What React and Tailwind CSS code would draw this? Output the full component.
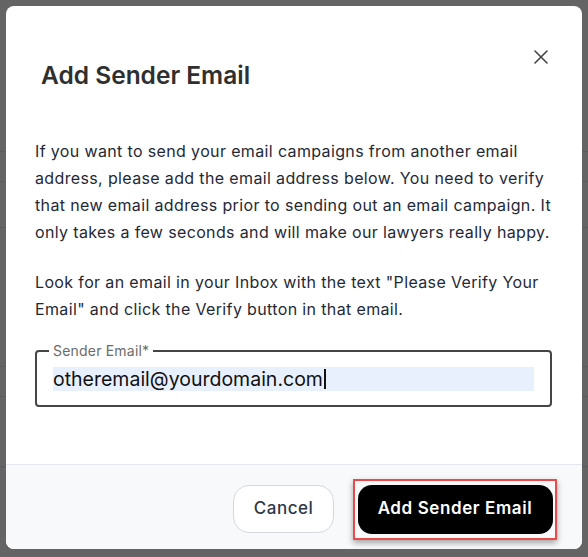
const CloseIcon = () => (
  <svg width="14" height="14" viewBox="0 0 14 14" fill="none" stroke="#444" strokeWidth="1.6" strokeLinecap="round">
    <path d="M1 1L13 13M13 1L1 13" />
  </svg>
);

const App = () => {
  return (
    <div className="relative w-[588px] h-[557px] overflow-hidden bg-[#646464] font-['Inter',sans-serif]">
      {/* page behind the dialog */}
      <div className="flex flex-col">
        <div className="h-[152px] border-b border-[#5a5a5a]" />
        <div className="h-[30px] border-b border-[#5a5a5a]" />
        <div className="h-[46px] border-b border-[#5a5a5a]" />
        <div className="h-[139px] border-b border-[#5a5a5a]" />
        <div className="h-[30px] border-b border-[#5a5a5a]" />
        <div className="h-[70px] border-b border-[#5a5a5a]" />
      </div>

      <div className="absolute left-[6px] top-[6px] w-[576px] h-[543px] flex flex-col overflow-hidden rounded-[8px] bg-white">
        <div className="flex items-start justify-between pt-[44px] pl-[35px] pr-[34px]">
          <h2 className="mt-[10px] text-[24.5px] leading-[30px] font-semibold text-[#2f2f2f]">Add Sender Email</h2>
          <button className="flex h-[14px] w-[14px] items-center justify-center">
            <CloseIcon />
          </button>
        </div>

        <div className="flex-1 pl-[29px] pr-[24px] pt-[48px] text-[16px] leading-[27px] tracking-[0.36px] text-[#1f2937] whitespace-nowrap">
          <p>
            If you want to send your email campaigns from another email<br />
            address, please add the email address below. You need to verify<br />
            that new email address prior to sending out an email campaign. It<br />
            only takes a few seconds and will make our lawyers really happy.
          </p>
          <p className="mt-[23px]">
            Look for an email in your Inbox with the text "Please Verify Your<br />
            Email" and click the Verify button in that email.
          </p>

          <fieldset className="mt-[20px] mr-[6px] rounded-[4px] border-2 border-[#454545] px-[16px] pt-[8px] pb-[14px]">
            <legend className="ml-[-4px] px-[4px] text-[14px] leading-[16px] tracking-[0.2px] text-[#6b6b6b]">Sender Email*</legend>
            <div className="flex h-[24px] items-center bg-[#e8f0fe] text-[19.5px] leading-[24px] tracking-normal text-[#111]">
              <span>otheremail@yourdomain.com</span>
              <span className="ml-[1px] h-[20px] w-[2px] bg-[#111]" />
            </div>
          </fieldset>
        </div>

        <div className="flex h-[85px] items-center justify-end gap-[19px] border-t border-[#e3e6ec] bg-[#f8f9fb] pt-[4px] pr-[25px]">
          <button className="flex h-[48px] w-[101px] items-center justify-center rounded-[16px] border border-[#d5d8de] bg-white text-[17px] font-medium tracking-[0.5px] text-[#2d3748]">
            Cancel
          </button>
          <div className="flex h-[61px] w-[204px] items-center justify-center border-2 border-[#ec4a4a] shadow-[0_3px_6px_rgba(0,0,0,0.35)]">
            <button className="flex h-[49px] w-[195px] items-center justify-center rounded-[14px] bg-black text-[17px] font-semibold tracking-[0.6px] text-white">
              Add Sender Email
            </button>
          </div>
        </div>
      </div>
    </div>
  );
};

export default App;
